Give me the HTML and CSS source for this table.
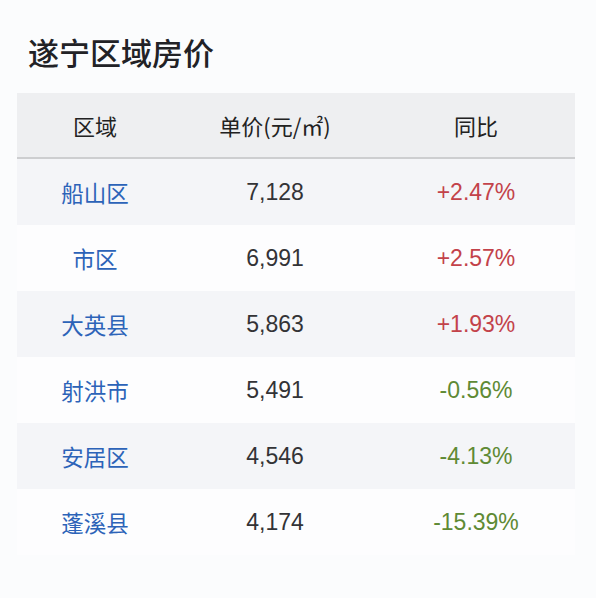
FILE: index.html
```html
<!DOCTYPE html>
<html lang="zh">
<head>
<meta charset="utf-8">
<link rel="stylesheet" href="styles.css">
</head>
<body>
<div class="card">
  <h1 class="title">遂宁区域房价</h1>
  <div class="table">
    <div class="row head">
      <div class="cell">区域</div>
      <div class="cell">单价(元/㎡)</div>
      <div class="cell">同比</div>
    </div>
    <div class="row odd">
      <div class="cell name">船山区</div>
      <div class="cell num">7,128</div>
      <div class="cell up">+2.47%</div>
    </div>
    <div class="row">
      <div class="cell name">市区</div>
      <div class="cell num">6,991</div>
      <div class="cell up">+2.57%</div>
    </div>
    <div class="row odd">
      <div class="cell name">大英县</div>
      <div class="cell num">5,863</div>
      <div class="cell up">+1.93%</div>
    </div>
    <div class="row">
      <div class="cell name">射洪市</div>
      <div class="cell num">5,491</div>
      <div class="cell down">-0.56%</div>
    </div>
    <div class="row odd">
      <div class="cell name">安居区</div>
      <div class="cell num">4,546</div>
      <div class="cell down">-4.13%</div>
    </div>
    <div class="row">
      <div class="cell name">蓬溪县</div>
      <div class="cell num">4,174</div>
      <div class="cell down">-15.39%</div>
    </div>
  </div>
</div>
</body>
</html>
```

FILE: styles.css
```css
html, body {
  margin: 0;
  padding: 0;
  background: #fbfcfd;
}
body {
  width: 596px;
  height: 598px;
  font-family: "Liberation Sans", "Noto Sans CJK SC", sans-serif;
}
.card {
  padding: 33px 21px 0 17px;
}
.title {
  margin: 0 0 23px 11px;
  font-family: "Noto Sans CJK SC", sans-serif;
  font-size: 31px;
  line-height: 37px;
  font-weight: 500;
  color: #222226;
}
.table {
  width: 558px;
}
.row {
  display: grid;
  grid-template-columns: 156px 204px 198px;
  height: 66px;
  align-items: center;
  background: #fdfdfe;
}
.row.odd {
  background: #f4f5f8;
}
.row.head {
  background: #eeeff1;
  height: 64px;
  border-bottom: 2px solid #cdced0;
}
.cell {
  text-align: center;
  font-size: 23px;
  line-height: 28px;
  color: #333336;
}
.head .cell {
  font-family: "Noto Sans CJK SC", sans-serif;
  font-size: 22px;
  color: #222;
}
.name {
  font-family: "Noto Sans CJK SC", sans-serif;
  font-size: 22.5px;
  color: #2c63b8;
}
.up {
  color: #c3424a;
}
.down {
  color: #5f8a34;
}
```
